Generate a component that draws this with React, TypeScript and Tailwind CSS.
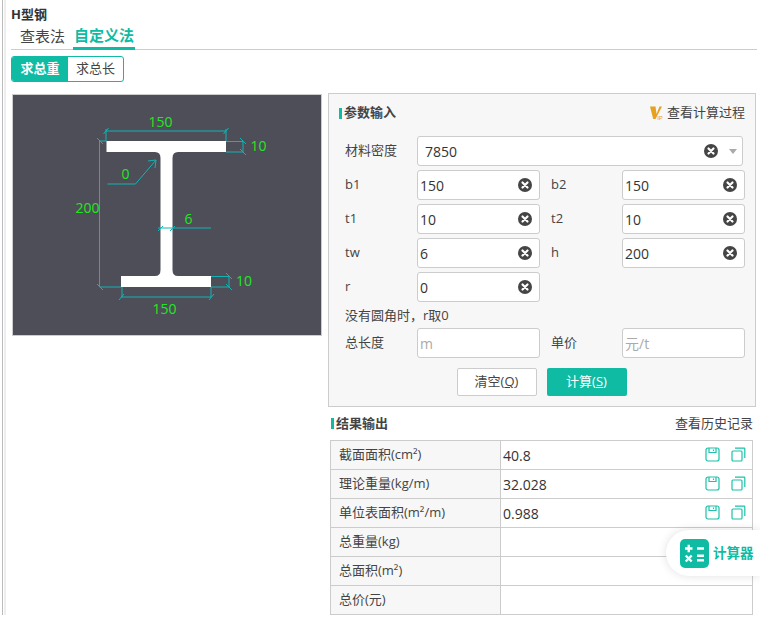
const font = '[font-family:"Open_Sans","Noto_Sans_CJK_SC",sans-serif]'

const results = [
  { label: <>截面面积(cm²)</>, value: '40.8', actions: true },
  { label: <>理论重量(kg/m)</>, value: '32.028', actions: true },
  { label: <>单位表面积(m²/m)</>, value: '0.988', actions: true },
  { label: <>总重量(kg)</>, value: '', actions: false },
  { label: <>总面积(m²)</>, value: '', actions: false },
  { label: <>总价(元)</>, value: '', actions: false },
]

function ClearIcon() {
  return (
    <svg width="14" height="14" viewBox="0 0 14 14" className="shrink-0">
      <circle cx="7" cy="7" r="7" fill="#454545" />
      <path d="M4.500 4.500l5 5M9.500 4.500l-5 5" stroke="#fff" strokeWidth="2.200" strokeLinecap="round" />
    </svg>
  )
}

function SaveIcon() {
  return (
    <svg width="15" height="15" viewBox="0 0 15 15" fill="none" stroke="#19c2a8" strokeWidth="1.200">
      <path d="M3 1h9a2 2 0 0 1 2 2v9a2 2 0 0 1-2 2H3a2 2 0 0 1-2-2V3a2 2 0 0 1 2-2z" />
      <path d="M4 1v4.500h7V1" />
      <path d="M8.500 2.500v1.500" />
    </svg>
  )
}

function CopyIcon() {
  return (
    <svg width="15" height="15" viewBox="0 0 15 15" fill="none" stroke="#19c2a8" strokeWidth="1.200">
      <rect x="1" y="4" width="10" height="10" rx="1" />
      <path d="M4 1.200h9.200a.6.6 0 0 1 .6.6V11" />
    </svg>
  )
}

function Field({ value, placeholder, clear = true }: { value?: string; placeholder?: string; clear?: boolean }) {
  return (
    <div className="flex h-[30px] w-[123px] items-center rounded-[3px] border border-[#ccc] bg-white px-[2px]">
      <input
        readOnly
        value={value ?? ''}
        placeholder={placeholder}
        className="w-0 flex-1 bg-transparent text-[14px] text-[#333] outline-none placeholder:text-[#aaa]"
      />
      {clear && (
        <span className="mr-[5px]">
          <ClearIcon />
        </span>
      )}
    </div>
  )
}

function Row({ label, children }: { label: string; children: React.ReactNode }) {
  return (
    <div className="flex items-center">
      <span className="box-content w-[72px] pl-[16px] text-[13px] text-[#444]">{label}</span>
      {children}
    </div>
  )
}

function SideLabel({ text }: { text: string }) {
  return <span className="w-[82px] pl-[11px] text-[13px] text-[#444]">{text}</span>
}

function Section({ title }: { title: string }) {
  return (
    <span className="flex items-center gap-[2px] text-[13px] font-bold text-[#444]">
      <span className="h-[11px] w-[3px] bg-[#0fbba3]" />
      {title}
    </span>
  )
}

function Drawing() {
  const line = '#14b3b3'
  const green = '#1fe81f'
  return (
    <svg viewBox="13 95 308 240" className="block h-full w-full" fontFamily="Open Sans, sans-serif" fontSize="14">
      <path
        d="M106.500 141H226V152H178Q172.500 152 172.500 158V270Q172.500 276 178 276H211V287H121V276H155Q160.500 276 160.500 270V158Q160.500 152 155 152H106.500Z"
        fill="#fff"
      />
      <g stroke={line} strokeWidth="1" fill="none">
        <path d="M106 131H226M106 129V141M226 129V141M103.500 134L108.500 128M223.500 134L228.500 128" />
        <path d="M226 141.500H243M226 152H243M243 141V152M240 138L246 144M240 149L246 155" />
        <path d="M99.500 141V287M97 138L103 144M97 284L103 290M99.500 141H106M99.500 287H121" />
        <path d="M107.500 184H135.500L156 160M148 161L156 160L155 168" />
        <path d="M158 228H211M158 231L163 226M170 231L175 226" />
        <path d="M121 297H211M122 287V297M211 287V297M119 300L124 294M209 300L214 294" />
        <path d="M211 276.500H230M211 287H230M229 276V287M226 273L232 279M226 284L232 290" />
      </g>
      <g fill={green}>
        <text x="160.500" y="127" textAnchor="middle">150</text>
        <text x="250.500" y="151">10</text>
        <text x="87.500" y="213" textAnchor="middle">200</text>
        <text x="125.500" y="179" textAnchor="middle">0</text>
        <text x="188.500" y="224" textAnchor="middle">6</text>
        <text x="164.500" y="314" textAnchor="middle">150</text>
        <text x="236" y="286">10</text>
      </g>
    </svg>
  )
}

export default function App() {
  return (
    <div className={`relative h-[619px] w-[760px] overflow-hidden bg-white ${font}`}>
      <div className="ml-[2px] h-[615px] border-l border-[#bbb] pl-[1px]">
        <div className="h-full border-l-2 border-[#eee] pl-[5px] pr-[3px]">
          <h1 className="pt-[7px] text-[13px] font-bold leading-[15px] text-[#333]">H型钢</h1>
          <div className="mt-[1px] flex h-[27px] gap-[7px] border-b border-[#ccc] pl-[8px]">
            <span className="px-[1px] text-[15px] leading-[26px] text-[#444]">查表法</span>
            <span className="h-[27px] border-b-[3px] border-[#0fbba3] px-[1px] text-[15px] font-bold leading-[24px] text-[#0fbba3]">自定义法</span>
          </div>
          <div className="mt-[6px] flex h-[26px] w-[113px] overflow-hidden rounded-[3px] border border-[#0fbba3] text-[13px]">
            <span className="flex w-[56px] items-center justify-center bg-[#0fbba3] font-bold text-white">求总重</span>
            <span className="flex flex-1 items-center justify-center text-[#444]">求总长</span>
          </div>

          <div className="mt-[11px] flex items-start">
            <div className="ml-[1px] mt-[1px] h-[242px] w-[310px] border border-[#ccc] bg-[#4d4e58]">
              <Drawing />
            </div>

            <div className="ml-[6px] w-[428px]">
              <section className="h-[314px] border border-[#ccc] bg-[#f7f7f7]">
                <div className="flex h-[41px] items-center justify-between px-[10px] pb-[3px]">
                  <Section title="参数输入" />
                  <span className="flex items-center gap-[4px] text-[13px] text-[#444]">
                    <svg width="13" height="14" viewBox="0 0 13 14">
                      <path d="M0 .5h5.500l1 7.500 3-7.500h2.500L5.500 13H3.200z" fill="#e8a020" />
                      <text x="7.200" y="13.500" fontSize="6" fill="#e8a020" fontFamily="Liberation Sans">IP</text>
                    </svg>
                    查看计算过程
                  </span>
                </div>
                <div className="flex flex-col gap-[4px] pt-[1px]">
                  <Row label="材料密度">
                    <div className="flex h-[30px] w-[326px] items-center rounded-[3px] border border-[#ccc] bg-white pl-[7px] pr-[5px]">
                      <span className="flex-1 text-[14px] text-[#333]">7850</span>
                      <ClearIcon />
                      <span className="ml-[11px] border-x-[4px] border-t-[5px] border-x-transparent border-t-[#aaa]" />
                    </div>
                  </Row>
                  <Row label="b1">
                    <Field value="150" />
                    <SideLabel text="b2" />
                    <Field value="150" />
                  </Row>
                  <Row label="t1">
                    <Field value="10" />
                    <SideLabel text="t2" />
                    <Field value="10" />
                  </Row>
                  <Row label="tw">
                    <Field value="6" />
                    <SideLabel text="h" />
                    <Field value="200" />
                  </Row>
                  <Row label="r">
                    <Field value="0" />
                  </Row>
                </div>
                <p className="py-[2px] pl-[16px] text-[13px] leading-[22px] text-[#444]">没有圆角时，r取0</p>
                <Row label="总长度">
                  <Field placeholder="m" clear={false} />
                  <SideLabel text="单价" />
                  <Field placeholder="元/t" clear={false} />
                </Row>
                <div className="mt-[10px] flex justify-center gap-[10px] pr-[1px]">
                  <button className="h-[28px] w-[80px] rounded-[2px] border border-[#ccc] bg-white text-[13px] text-[#444]">
                    清空(<span className="underline">Q</span>)
                  </button>
                  <button className="h-[28px] w-[80px] rounded-[2px] bg-[#0fbba3] text-[13px] text-white">
                    计算(<span className="underline">S</span>)
                  </button>
                </div>
              </section>

              <div className="flex h-[33px] items-center justify-between px-[3px]">
                <Section title="结果输出" />
                <span className="text-[13px] text-[#444]">查看历史记录</span>
              </div>
              <table className="ml-[2px] w-[423px] table-fixed border-collapse text-[13px] text-[#444]">
                <colgroup>
                  <col className="w-[170px]" />
                  <col />
                </colgroup>
                <tbody>
                  {results.map((r, i) => (
                    <tr key={i} className="h-[29px]">
                      <td className="border border-[#ccc] bg-[#f7f7f7] p-0 pb-[1px] pl-[8px] leading-none">{r.label}</td>
                      <td className="border border-[#ccc] p-0 pl-[2px] leading-none text-[#333]">
                        <div className="flex items-center justify-between pr-[6px] pt-[1px] text-[14px]">
                          <span>{r.value}</span>
                          {r.actions && (
                            <span className="flex gap-[11px] pb-[3px]">
                              <SaveIcon />
                              <CopyIcon />
                            </span>
                          )}
                        </div>
                      </td>
                    </tr>
                  ))}
                </tbody>
              </table>
            </div>
          </div>
        </div>
      </div>

      {/* floating calculator */}
      <div className="absolute right-0 top-[530px] flex h-[46px] w-[94px] items-center gap-[4px] rounded-l-[23px] bg-white pl-[14px] shadow-[0_0_10px_rgba(0,0,0,0.12)]">
        <svg width="29" height="29" viewBox="0 0 29 29" className="shrink-0">
          <rect width="29" height="29" rx="5" fill="#0fbba3" />
          <path d="M5 9.500h7.500M8.750 5.750v7.500M5.700 16.500l6 6M11.700 16.500l-6 6M17 9.500h7M17 16.800h7M17 21.300h7" stroke="#fff" strokeWidth="2.400" />
        </svg>
        <span className="text-[13.500px] font-bold text-[#0fbba3]">计算器</span>
      </div>
    </div>
  )
}
